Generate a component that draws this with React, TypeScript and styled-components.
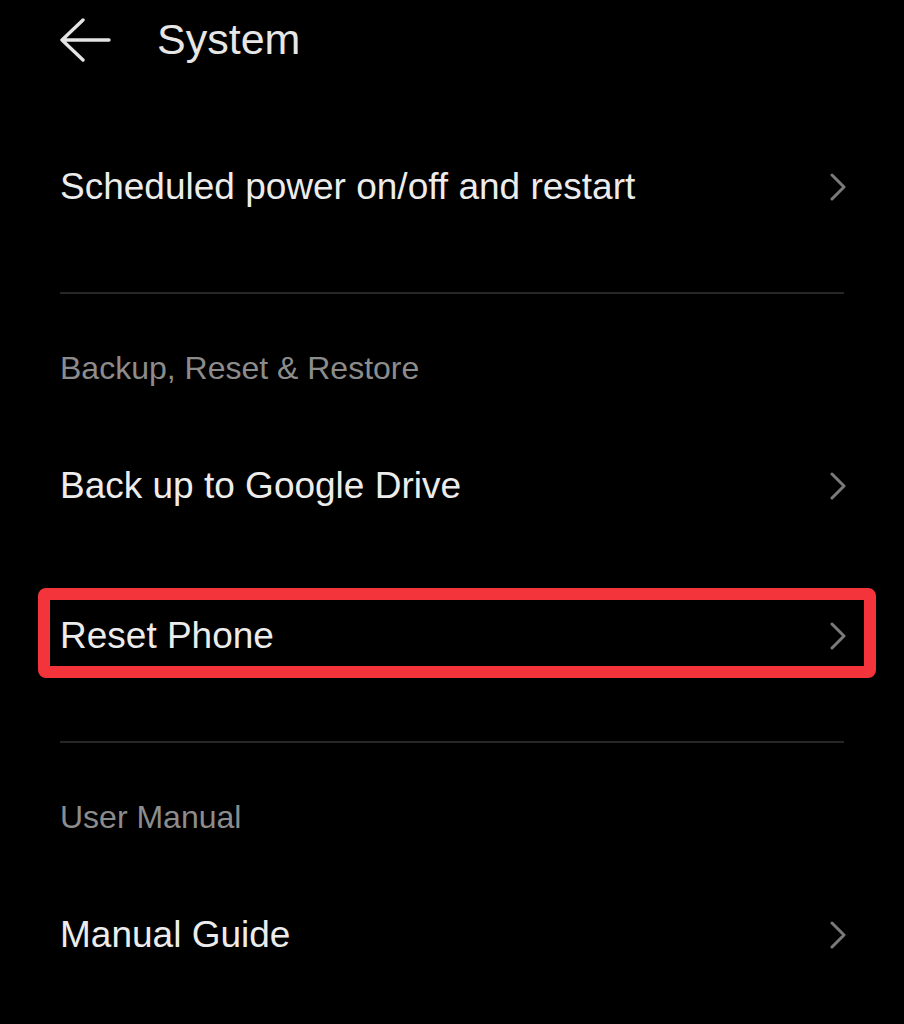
import styled, { createGlobalStyle } from "styled-components";

const GlobalStyle = createGlobalStyle`
  body {
    margin: 0;
    background: #000;
    font-family: "Liberation Sans", "DejaVu Sans", sans-serif;
  }
`;

const Page = styled.div`
  background: #000;
  min-height: 1024px;
  padding: 0 60px;
  box-sizing: border-box;
`;
const Header = styled.div`
  height: 80px;
  display: flex;
  align-items: center;
  gap: 46px;
  margin-bottom: 32px;
`;
const Title = styled.div`
  color: #e6e6e6;
  font-size: 43px;
  line-height: 48px;
  padding-bottom: 2px;
`;
const Row = styled.div`
  position: relative;
  height: 150px;
  display: flex;
  align-items: center;
  justify-content: space-between;
`;
const Label = styled.span`
  color: #ececec;
  font-size: 37px;
  line-height: 42px;
`;
const Divider = styled.div`
  height: 2px;
  margin-top: 30px;
  background: #262626;
`;
const SectionTitle = styled.div`
  padding: 56px 0 25px;
  line-height: 36px;
  font-size: 32px;
  color: #8c8c8c;
`;
const Highlight = styled.div`
  position: absolute;
  top: 27px;
  bottom: 33px;
  left: -22px;
  right: -32px;
  border: 12px solid #f4343b;
  border-radius: 8px;
  pointer-events: none;
`;
const Chevron = styled.svg`
  margin-right: -2px;
  flex-shrink: 0;
`;

function ChevronIcon() {
  return (
    <Chevron width="16" height="28" viewBox="0 0 16 28">
      <path
        d="M2 2 L14 14 L2 26"
        fill="none"
        stroke="#7a7a7a"
        strokeWidth="3"
        strokeLinecap="round"
        strokeLinejoin="round"
      />
    </Chevron>
  );
}

function Item({ label, marked }: { label: string; marked?: boolean }) {
  return (
    <Row>
      <Label>{label}</Label>
      <ChevronIcon />
      {marked && <Highlight />}
    </Row>
  );
}

export default function App() {
  return (
    <>
      <GlobalStyle />
      <Page>
        <Header>
          <svg width="51" height="44" viewBox="0 0 51 44">
            <path
              d="M23 2 L2 22 L23 42 M2 22 L49 22"
              fill="none"
              stroke="#e4e4e4"
              strokeWidth="3.4"
              strokeLinecap="round"
              strokeLinejoin="round"
            />
          </svg>
          <Title>System</Title>
        </Header>
        <Item label="Scheduled power on/off and restart" />
        <Divider />
        <SectionTitle>Backup, Reset &amp; Restore</SectionTitle>
        <Item label="Back up to Google Drive" />
        <Item label="Reset Phone" marked />
        <Divider />
        <SectionTitle>User Manual</SectionTitle>
        <Item label="Manual Guide" />
      </Page>
    </>
  );
}
